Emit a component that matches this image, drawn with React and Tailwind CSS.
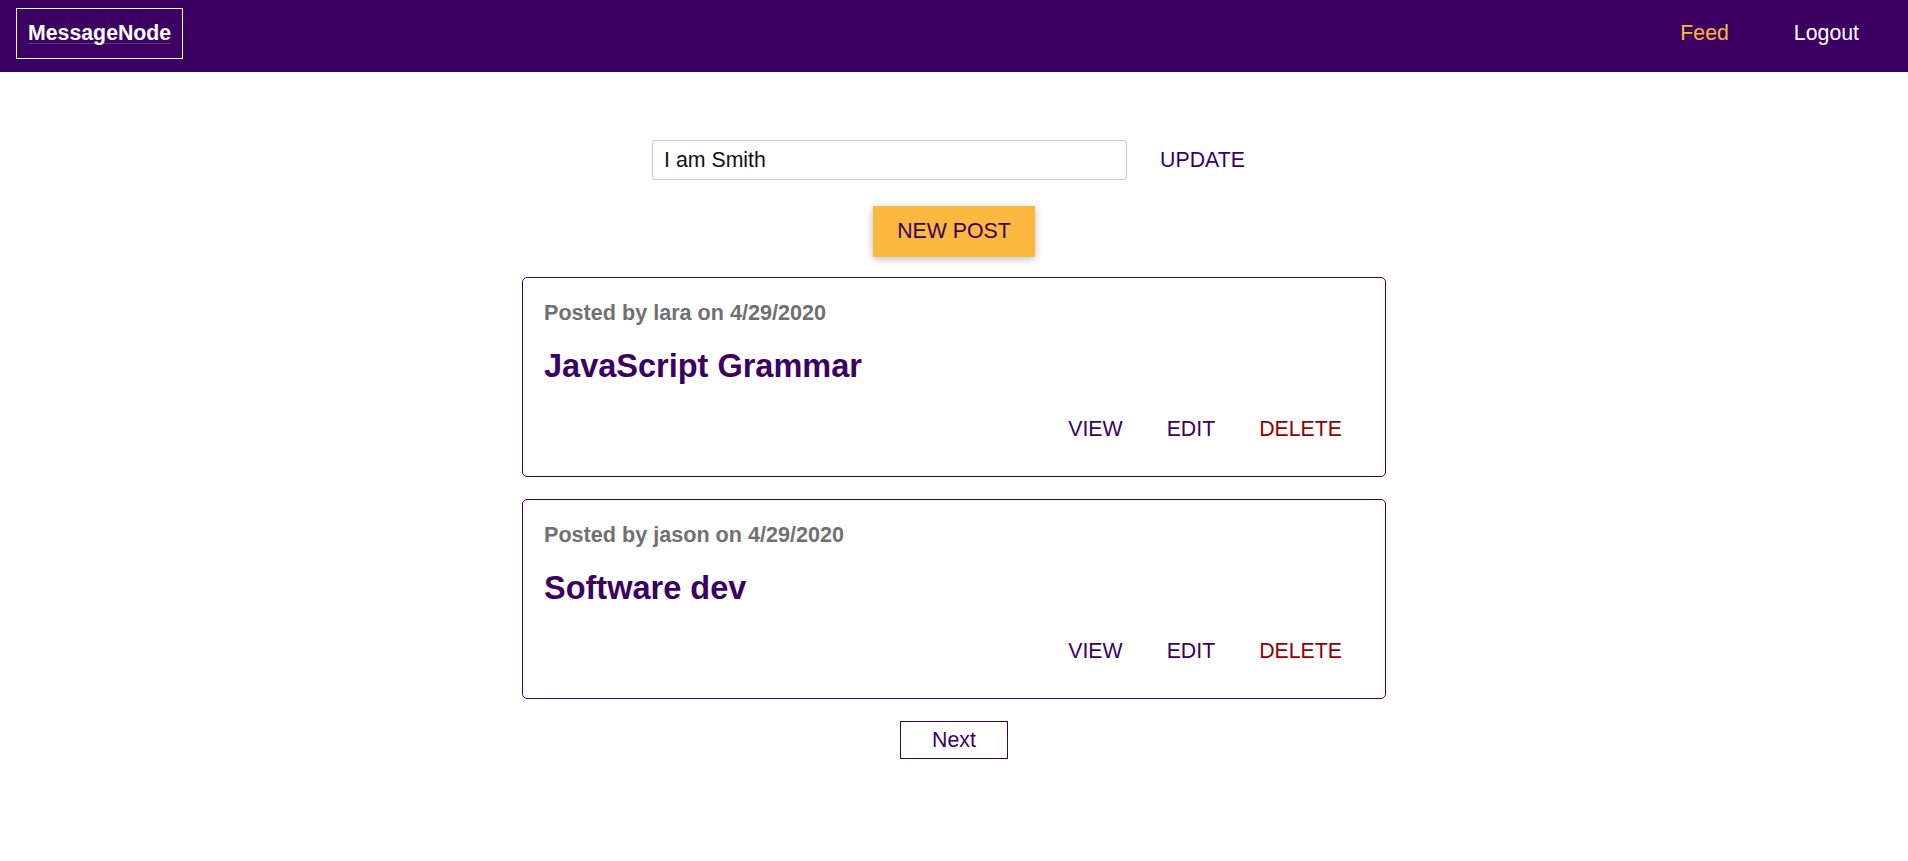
import React from "react";

const posts = [
  { author: "lara", date: "4/29/2020", title: "JavaScript Grammar" },
  { author: "jason", date: "4/29/2020", title: "Software dev" },
];

export default function App() {
  return (
    <div className="min-h-[861px] bg-white font-['Liberation_Sans',Arial,sans-serif] text-[21.3px] leading-[24.5px]">
      <header className="h-[72px] bg-[#3b0062] flex items-center justify-between pl-[16px] pr-[49px] pb-[5px]">
        <div className="border border-white px-[11px] py-[12px] font-bold text-white underline decoration-[#5e3888] decoration-1 underline-offset-[3px]">
          MessageNode
        </div>
        <nav className="flex items-center gap-[65px]">
          <span className="text-[#fab83f]">Feed</span>
          <span className="text-white">Logout</span>
        </nav>
      </header>

      <main className="flex flex-col items-center">
        <div className="mt-[68px] ml-[11px] flex items-center gap-[11px]">
          <div className="w-[475px] h-[40px] border border-[#cccccc] rounded-[3px] flex items-center pl-[11px] text-[#111]">
            I am Smith
          </div>
          <button className="px-[22px] py-[7px] text-[#3b0062]">UPDATE</button>
        </div>

        <button className="mt-[26px] bg-[#fab83f] text-[#3b0062] px-[24.5px] py-[13px] shadow-[0_2px_8px_rgba(0,0,0,0.26)]">
          NEW POST
        </button>

        <div className="w-[864px] mt-[20px] flex flex-col gap-[22px]">
          {posts.map((p) => (
            <article
              key={p.title}
              className="border border-[#3b0062] rounded-[5px] px-[21px] pt-[23px] pb-[21px]"
            >
              <p className="font-bold text-[#707070] text-[21.6px]">
                Posted by {p.author} on {p.date}
              </p>
              <h1 className="mt-[23px] mb-[19px] text-[32.5px] leading-[37px] font-bold text-[#3b0062]">
                {p.title}
              </h1>
              <div className="flex justify-end">
                <button className="px-[22px] py-[13px] text-[#3b0062]">VIEW</button>
                <button className="px-[22px] py-[13px] text-[#3b0062]">EDIT</button>
                <button className="px-[22px] py-[13px] text-[#930000]">DELETE</button>
              </div>
            </article>
          ))}
        </div>

        <button className="mt-[22px] border border-[#3b0062] text-[#3b0062] px-[31px] py-[6px]">
          Next
        </button>
      </main>
    </div>
  );
}
